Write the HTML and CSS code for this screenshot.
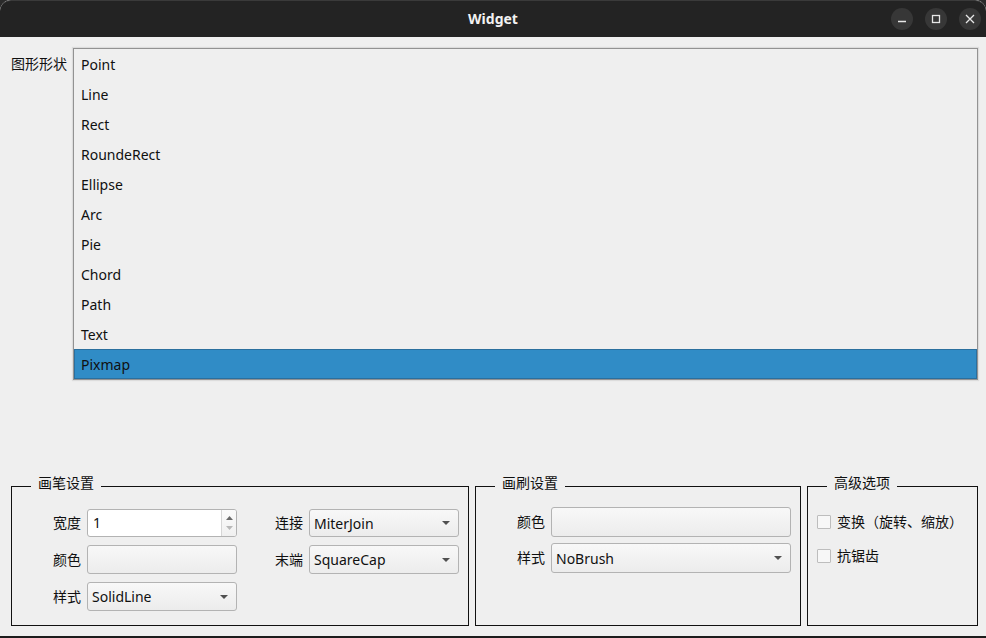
FILE: index.html
```html
<!DOCTYPE html>
<html lang="zh">
<head>
<meta charset="utf-8">
<title>Widget</title>
<link rel="stylesheet" href="styles.css">
</head>
<body>
<div class="window">
  <header class="titlebar">
    <span></span>
    <span class="title">Widget</span>
    <div class="controls">
      <button class="ctl" aria-label="minimize"><svg width="10" height="10" viewBox="0 0 10 10"><path d="M1 7.5h8" stroke="#e6e6e6" stroke-width="1.3"/></svg></button>
      <button class="ctl" aria-label="maximize"><svg width="10" height="10" viewBox="0 0 10 10"><rect x="1.5" y="1.5" width="7" height="7" fill="none" stroke="#e6e6e6" stroke-width="1.3"/></svg></button>
      <button class="ctl" aria-label="close"><svg width="10" height="10" viewBox="0 0 10 10"><path d="M1 1L9 9M9 1L1 9" stroke="#e6e6e6" stroke-width="1.3"/></svg></button>
    </div>
  </header>
  <main class="content">
    <section class="shape-row">
      <span class="shape-label">图形形状</span>
      <ul class="shape-list">
        <li>Point</li>
        <li>Line</li>
        <li>Rect</li>
        <li>RoundeRect</li>
        <li>Ellipse</li>
        <li>Arc</li>
        <li>Pie</li>
        <li>Chord</li>
        <li>Path</li>
        <li>Text</li>
        <li class="selected">Pixmap</li>
      </ul>
    </section>
    <section class="groups">
      <fieldset class="group pen">
        <legend>画笔设置</legend>
        <div class="pen-grid">
          <span class="lbl">宽度</span>
          <div class="spin">
            <span class="spin-text">1</span>
            <span class="spin-btns">
              <svg width="7" height="4" viewBox="0 0 7 4"><path d="M0 4h7L3.5 0z" fill="#6a6a6a"/></svg>
              <svg width="7" height="4" viewBox="0 0 7 4"><path d="M0 0h7L3.5 4z" fill="#b8b8b8"/></svg>
            </span>
          </div>
          <span></span>
          <span class="lbl">连接</span>
          <div class="combo"><span>MiterJoin</span><svg width="8" height="4" viewBox="0 0 8 4"><path d="M0 0h8L4 4z" fill="#505050"/></svg></div>

          <span class="lbl">颜色</span>
          <div class="colorbtn"></div>
          <span></span>
          <span class="lbl">末端</span>
          <div class="combo"><span>SquareCap</span><svg width="8" height="4" viewBox="0 0 8 4"><path d="M0 0h8L4 4z" fill="#505050"/></svg></div>

          <span class="lbl">样式</span>
          <div class="combo"><span>SolidLine</span><svg width="8" height="4" viewBox="0 0 8 4"><path d="M0 0h8L4 4z" fill="#505050"/></svg></div>
        </div>
      </fieldset>
      <fieldset class="group brush">
        <legend>画刷设置</legend>
        <div class="brush-grid">
          <span class="lbl">颜色</span>
          <div class="colorbtn"></div>
          <span class="lbl">样式</span>
          <div class="combo"><span>NoBrush</span><svg width="8" height="4" viewBox="0 0 8 4"><path d="M0 0h8L4 4z" fill="#505050"/></svg></div>
        </div>
      </fieldset>
      <fieldset class="group adv">
        <legend>高级选项</legend>
        <div class="adv-list">
          <label class="check"><span class="box"></span>变换（旋转、缩放）</label>
          <label class="check"><span class="box"></span>抗锯齿</label>
        </div>
      </fieldset>
    </section>
  </main>
</div>
</body>
</html>
```

FILE: styles.css
```css
* { box-sizing: border-box; }
html, body {
  margin: 0;
  padding: 0;
  background: #2b2b2b;
}
body {
  font-family: "Noto Sans", "Noto Sans CJK SC", sans-serif;
  font-size: 14px;
  color: #101010;
}
.window {
  width: 986px;
  height: 638px;
  display: flex;
  flex-direction: column;
  background: #efefef;
  border-bottom: 2px solid #1c1c1c;
  border-radius: 11px 11px 0 0;
  overflow: hidden;
}
.titlebar {
  height: 37px;
  flex: none;
  background: #232323;
  border-top: 1px solid #3a3a3a;
  border-radius: 11px 11px 0 0;
  display: grid;
  grid-template-columns: 1fr auto 1fr;
  align-items: center;
}
.title {
  color: #f2f2f2;
  font-weight: bold;
  font-size: 14px;
  line-height: 18px;
  margin-top: -1px;
}
.controls {
  justify-self: end;
  display: flex;
  gap: 12px;
  padding-right: 5px;
  margin-top: -1px;
}
.ctl {
  width: 22px;
  height: 22px;
  border-radius: 50%;
  border: none;
  padding: 0;
  background: #373737;
  display: flex;
  align-items: center;
  justify-content: center;
}
.content {
  flex: 1;
  display: flex;
  flex-direction: column;
  padding: 11px 8px 10px 11px;
}
.shape-row {
  display: flex;
  gap: 6px;
  align-items: flex-start;
}
.shape-label {
  width: 56px;
  line-height: 30px;
  padding-top: 1px;
}
.shape-list {
  flex: 1;
  list-style: none;
  margin: 0;
  padding: 0;
  border: 1px solid #929292;
  box-shadow: 0 0 1px 1px rgba(0,0,0,0.08);
  background: #efefef;
}
.shape-list li {
  height: 30px;
  line-height: 30px;
  padding: 1px 0 0 7px;
  overflow: visible;
}
.shape-list li.selected {
  background: #308cc6;
  box-shadow: inset 0 0 0 1px #2a6f9e;
}
.groups {
  margin-top: auto;
  display: flex;
  gap: 6px;
}
.group {
  margin: 0;
  padding: 0;
  height: 151px;
  border: 1px solid #111;
}
.group legend {
  margin-left: 19px;
  padding: 0 7px 7px;
  line-height: 16px;
}
.pen { width: 458px; }
.brush { width: 326px; }
.adv { width: 171px; }
.lbl { line-height: 20px; }
.pen-grid {
  display: grid;
  grid-template-columns: 28px 150px 26px 28px 150px;
  grid-template-rows: 28px 29px 29px;
  column-gap: 6px;
  row-gap: 8px;
  align-items: center;
  padding: 11px 0 0 41px;
}
.brush-grid {
  display: grid;
  grid-template-columns: 28px 240px;
  grid-auto-rows: 30px;
  column-gap: 6px;
  row-gap: 6px;
  align-items: center;
  padding: 9px 0 0 41px;
}
.combo, .colorbtn, .spin {
  height: 100%;
  border: 1px solid #b3b3b3;
  border-radius: 3px;
}
.combo, .colorbtn {
  background: linear-gradient(#f8f8f8, #ececec);
}
.combo {
  display: flex;
  align-items: center;
  justify-content: space-between;
  padding: 0 8px 0 4px;
}
.spin {
  background: #fff;
  display: flex;
}
.spin-text {
  flex: 1;
  padding-left: 5px;
  line-height: 26px;
}
.spin-btns {
  width: 15px;
  border-left: 1px solid #d6d6d6;
  background: linear-gradient(#fbfbfb, #f0f0f0);
  border-radius: 0 2px 2px 0;
  display: flex;
  flex-direction: column;
  align-items: center;
  justify-content: center;
  gap: 6px;
}
.spin-btns svg { display: block; }
.adv-list {
  display: flex;
  flex-direction: column;
  gap: 14px;
  padding: 14px 0 0 9px;
}
.check {
  display: flex;
  align-items: center;
  gap: 6px;
  line-height: 20px;
}
.box {
  width: 14px;
  height: 14px;
  border: 1px solid #bdbdbd;
  background: #f7f7f7;
  border-radius: 1px;
}
```
